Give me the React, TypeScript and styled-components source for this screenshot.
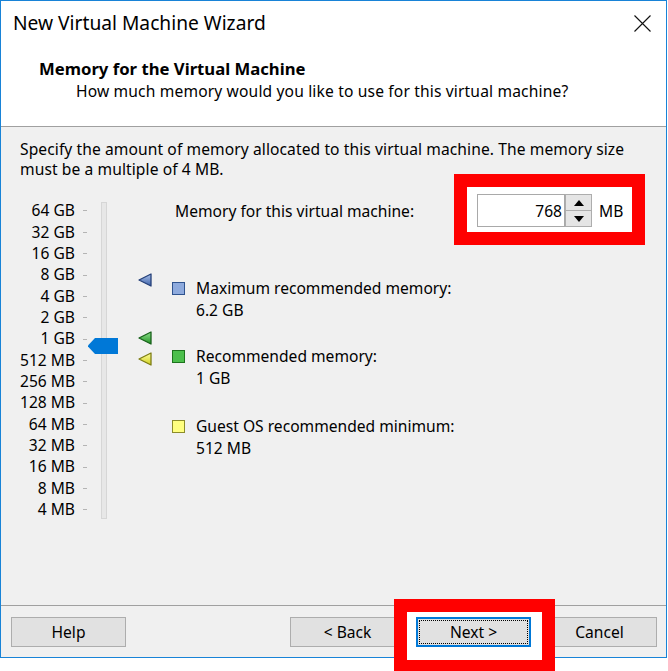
import React from "react";
import styled, { createGlobalStyle } from "styled-components";

const FONT = `"Noto Sans", "Liberation Sans", sans-serif`;

const GlobalStyle = createGlobalStyle`
  html, body { margin: 0; padding: 0; background: #ffffff; overflow: hidden; }
  body { font-family: ${FONT}; }
  #root { min-height: 671px; }
`;

const Window = styled.div`
  position: relative;
  width: 667px;
  height: 658px;
  box-sizing: border-box;
  border: 1px solid #1883d7;
  background: #f0f0f0;
  display: flex;
  flex-direction: column;
  font-family: ${FONT};
  font-size: 15.6px;
  color: #000;
`;

const TitleBar = styled.div`
  flex: none;
  height: 44px;
  background: #fff;
  display: flex;
  align-items: center;
  justify-content: space-between;
  padding: 0 15px 0 12px;
`;

const TitleText = styled.div`
  font-size: 19.2px;
  line-height: 24px;
`;

const CloseIcon = styled.svg`
  display: block;
  width: 17px;
  height: 17px;
`;

const Header = styled.div`
  flex: none;
  height: 82px;
  box-sizing: border-box;
  background: #fff;
  border-bottom: 1px solid #a0a0a0;
  padding-top: 12px;
`;

const HeaderTitle = styled.div`
  font-weight: 700;
  font-size: 16.7px;
  line-height: 23px;
  padding-left: 38px;
`;

const HeaderSub = styled.div`
  line-height: 23px;
  padding-left: 75px;
  letter-spacing: 0.15px;
`;

const Body = styled.div`
  flex: 1;
  padding: 11.5px 19px 0 19px;
`;

const Intro = styled.p`
  margin: 0;
  line-height: 20px;
  letter-spacing: 0.09px;
`;

const MemoryArea = styled.div`
  display: flex;
  margin-top: 15.5px;
`;

const Scale = styled.div`
  position: relative;
  flex: none;
  display: flex;
  padding-top: 6.3px;
`;

const LabelCol = styled.div`
  display: flex;
  flex-direction: column;
`;

const ScaleRow = styled.div`
  height: 21.35px;
  display: flex;
  align-items: center;
`;

const ScaleLabel = styled.span`
  width: 55px;
  text-align: right;
  line-height: 21.35px;
  white-space: nowrap;
`;

const Tick = styled.span`
  width: 4px;
  height: 1px;
  margin-left: 8px;
  background: #b4b4b4;
`;

const Track = styled.div`
  width: 6px;
  height: 317px;
  margin: 1.7px 0 0 14px;
  box-sizing: border-box;
  background: #e7e7e7;
  border: 1px solid #d6d6d6;
`;

const Thumb = styled.svg`
  position: absolute;
  left: 68px;
  width: 30px;
  height: 16px;
`;

const Markers = styled.div`
  position: relative;
  flex: none;
  width: 14px;
  margin-left: 31px;
`;

const Marker = styled.svg`
  position: absolute;
  left: 0;
  width: 14px;
  height: 14px;
`;

const Details = styled.div`
  margin-left: 20px;
  display: flex;
  flex-direction: column;
`;

const MemoryRow = styled.div`
  display: flex;
  align-items: center;
  height: 33px;
  padding-left: 3px;
`;

const MemoryLabel = styled.span`
  width: 302px;
  white-space: nowrap;
`;

const SpinGroup = styled.div`
  position: relative;
  z-index: 0;
  display: flex;
  align-items: center;
`;

const Highlight = styled.div<{ $l: number; $t: number; $w: number; $h: number }>`
  position: absolute;
  z-index: -1;
  left: ${(p) => p.$l}px;
  top: ${(p) => p.$t}px;
  width: ${(p) => p.$w}px;
  height: ${(p) => p.$h}px;
  box-sizing: border-box;
  background: #fff;
  border: 13px solid #ff0000;
`;

const NumberInput = styled.input`
  width: 88px;
  height: 33px;
  box-sizing: border-box;
  margin: 0;
  border: 1px solid #a9a9a9;
  background: #fff;
  padding: 0 2px 0 0;
  text-align: right;
  font-family: ${FONT};
  font-size: 15.6px;
  color: #000;
  outline: none;
`;

const SpinCol = styled.div`
  display: flex;
  flex-direction: column;
  width: 27px;
  height: 33px;
`;

const SpinButton = styled.div`
  flex: 1;
  box-sizing: border-box;
  background: #e5e5e5;
  border: 1px solid #adadad;
  display: flex;
  align-items: center;
  justify-content: center;
  & + & {
    border-top: none;
  }
`;

const Unit = styled.span`
  margin-left: 7px;
`;

const InfoItem = styled.div<{ $mt: number }>`
  display: flex;
  margin-top: ${(p) => p.$mt}px;
`;

const Swatch = styled.span<{ $fill: string; $edge: string }>`
  flex: none;
  width: 13px;
  height: 13px;
  margin-top: 4.5px;
  box-sizing: border-box;
  border: 1px solid ${(p) => p.$edge};
  background: ${(p) => p.$fill};
`;

const InfoText = styled.div`
  margin-left: 11px;
  line-height: 22px;
`;

const Footer = styled.div`
  flex: none;
  height: 52px;
  box-sizing: border-box;
  border-top: 1px solid #a0a0a0;
  display: flex;
  align-items: flex-start;
  padding: 11px 9px 0 10px;
`;

const Spacer = styled.div`
  flex: 1;
`;

const Button = styled.button<{ $gap?: number }>`
  width: 115px;
  height: 30px;
  margin: 0 0 0 ${(p) => p.$gap ?? 0}px;
  padding: 0;
  box-sizing: border-box;
  background: #e1e1e1;
  border: 1px solid #adadad;
  font-family: ${FONT};
  font-size: 15.6px;
  color: #000;
`;

const NextWrap = styled.div`
  position: relative;
  z-index: 0;
  margin-left: 11px;
`;

const FocusButton = styled(Button)`
  display: block;
  border-color: #0078d7;
  box-shadow: inset 0 0 0 1px #0078d7;
  outline: 1px dotted #000;
  outline-offset: -4px;
`;

const LABELS = [
  "64 GB", "32 GB", "16 GB", "8 GB", "4 GB", "2 GB", "1 GB",
  "512 MB", "256 MB", "128 MB", "64 MB", "32 MB", "16 MB", "8 MB", "4 MB",
];

const posFor = (mb: number) => 6.3 + (Math.log2(65536 / mb) + 0.5) * 21.35 - 1.5;

const MARKERS = [
  { id: "mk-blue", mb: 6.2 * 1024 * 1.05, top: "#a9c0ea", bottom: "#3d62a8", edge: "#243f78" },
  { id: "mk-green", mb: 1024, top: "#8ee08e", bottom: "#239323", edge: "#17601a" },
  { id: "mk-yellow", mb: 512, top: "#ffffa0", bottom: "#cfcf1c", edge: "#7d7d14" },
];

const ITEMS = [
  { mt: 50, fill: "#8eaadd", edge: "#2f538f", title: "Maximum recommended memory:", value: "6.2 GB" },
  { mt: 24, fill: "#4cbf4c", edge: "#1d731d", title: "Recommended memory:", value: "1 GB" },
  { mt: 26, fill: "#ffff80", edge: "#8c8c2a", title: "Guest OS recommended minimum:", value: "512 MB" },
];

export default function App() {
  const value = 768;
  return (
    <>
      <GlobalStyle />
      <Window>
        <TitleBar>
          <TitleText>New Virtual Machine Wizard</TitleText>
          <CloseIcon viewBox="0 0 17 17">
            <path d="M0.5 0.5 L16.5 16.5 M16.5 0.5 L0.5 16.5" stroke="#111" strokeWidth="1.1" fill="none" />
          </CloseIcon>
        </TitleBar>
        <Header>
          <HeaderTitle>Memory for the Virtual Machine</HeaderTitle>
          <HeaderSub>How much memory would you like to use for this virtual machine?</HeaderSub>
        </Header>
        <Body>
          <Intro>
            Specify the amount of memory allocated to this virtual machine. The memory size
            <br />
            must be a multiple of 4 MB.
          </Intro>
          <MemoryArea>
            <Scale>
              <LabelCol>
                {LABELS.map((l) => (
                  <ScaleRow key={l}>
                    <ScaleLabel>{l}</ScaleLabel>
                    <Tick />
                  </ScaleRow>
                ))}
              </LabelCol>
              <Track />
              <Thumb viewBox="0 0 30 16" style={{ top: posFor(value) - 8 }}>
                <polygon points="0,7.5 7,0 30,0 30,16 7,16 0,8.5" fill="#0078d7" />
              </Thumb>
            </Scale>
            <Markers>
              {MARKERS.map((m) => (
                <Marker key={m.id} viewBox="0 0 14 14" style={{ top: posFor(m.mb) - 7 }}>
                  <defs>
                    <linearGradient id={m.id} x1="0" y1="0" x2="0" y2="1">
                      <stop offset="0" stopColor={m.top} />
                      <stop offset="1" stopColor={m.bottom} />
                    </linearGradient>
                  </defs>
                  <polygon points="1,7 13,1 13,13" fill={`url(#${m.id})`} stroke={m.edge} strokeWidth="1.3" strokeLinejoin="round" />
                </Marker>
              ))}
            </Markers>
            <Details>
              <MemoryRow>
                <MemoryLabel>Memory for this virtual machine:</MemoryLabel>
                <SpinGroup>
                  <Highlight $l={-23} $t={-20} $w={191} $h={71} />
                  <NumberInput readOnly value={String(value)} />
                  <SpinCol>
                    <SpinButton>
                      <svg width="10" height="6" viewBox="0 0 10 6"><polygon points="0,6 5,0 10,6" fill="#000" /></svg>
                    </SpinButton>
                    <SpinButton>
                      <svg width="10" height="6" viewBox="0 0 10 6"><polygon points="0,0 10,0 5,6" fill="#000" /></svg>
                    </SpinButton>
                  </SpinCol>
                  <Unit>MB</Unit>
                </SpinGroup>
              </MemoryRow>
              {ITEMS.map((it) => (
                <InfoItem key={it.title} $mt={it.mt}>
                  <Swatch $fill={it.fill} $edge={it.edge} />
                  <InfoText>
                    <div>{it.title}</div>
                    <div>{it.value}</div>
                  </InfoText>
                </InfoItem>
              ))}
            </Details>
          </MemoryArea>
        </Body>
        <Footer>
          <Button>Help</Button>
          <Spacer />
          <Button>&lt; Back</Button>
          <NextWrap>
            <Highlight $l={-22} $t={-18} $w={161} $h={74} />
            <FocusButton>Next &gt;</FocusButton>
          </NextWrap>
          <Button $gap={11}>Cancel</Button>
        </Footer>
      </Window>
    </>
  );
}
